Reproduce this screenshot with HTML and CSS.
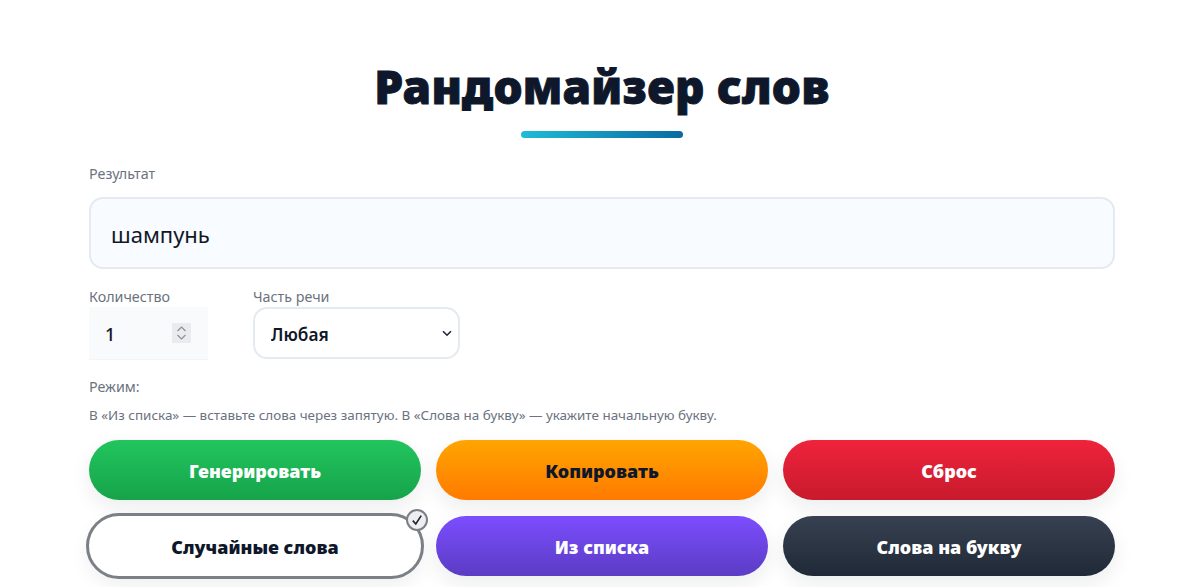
FILE: index.html
```html
<!DOCTYPE html>
<html lang="ru">
<head>
<meta charset="UTF-8">
<title>Рандомайзер слов</title>
<link rel="stylesheet" href="styles.css">
</head>
<body>
<div class="wrap">
<h1>Рандомайзер слов</h1>
<div class="title-line"></div>
<label class="label result-label" for="result">Результат</label>
<input type="text" id="result" class="result" value="шампунь" readonly>
<div class="controls">
<div class="field">
<label class="label" for="count">Количество</label>
<div class="count-box">
<input type="number" id="count" class="count" value="1" min="1">
<span class="spin">
<svg width="19" height="20" viewBox="0 0 19 20"><path d="M5.5 8 L9.5 4 L13.5 8 M5.5 12 L9.5 16 L13.5 12" fill="none" stroke="#8b9098" stroke-width="1.2"/></svg>
</span>
</div>
</div>
<div class="field">
<label class="label" for="part">Часть речи</label>
<div class="part-box">
<select id="part" class="part">
<option>Любая</option>
<option>Существительное</option>
<option>Глагол</option>
</select>
<svg class="arrow" width="10" height="7" viewBox="0 0 10 7"><path d="M1 1.2 L5 5.2 L9 1.2" fill="none" stroke="#1f2937" stroke-width="1.6"/></svg>
</div>
</div>
</div>
<div class="label mode-label">Режим:</div>
<p class="hint">В «Из списка» — вставьте слова через запятую. В «Слова на букву» — укажите начальную букву.</p>
<div class="buttons">
<button class="btn green">Генерировать</button>
<button class="btn orange">Копировать</button>
<button class="btn red">Сброс</button>
<button class="btn white active">Случайные слова
<span class="check">
<svg width="16" height="16" viewBox="0 0 16 16"><path d="M3.8 8.6 L6.8 12 L12.2 3.6" fill="none" stroke="#1c1f26" stroke-width="1.6"/></svg>
</span>
</button>
<button class="btn purple">Из списка</button>
<button class="btn dark">Слова на букву</button>
</div>
</div>
</body>
</html>
```

FILE: styles.css
```css
html,body{
margin:0;
padding:0;
background:#fff;
}
body{
font-family:"Noto Sans","Liberation Sans",sans-serif;
color:#0f172a;
}
.wrap{
width:1026px;
margin-left:89px;
padding-top:56px;
padding-bottom:11px;
}
h1{
margin:0;
font-size:46px;
line-height:60px;
font-weight:900;
letter-spacing:.2px;
text-align:center;
color:#0f172a;
-webkit-text-stroke:.9px #0f172a;
}
.title-line{
width:162px;
height:7px;
margin:15px auto 0;
border-radius:4px;
background:linear-gradient(90deg,#1fbcd6,#0a6aa1);
}
.label{
display:block;
font-size:14.3px;
line-height:18px;
color:#6b7280;
}
.result-label{
margin-top:27px;
}
.result{
display:block;
box-sizing:border-box;
width:100%;
height:72px;
margin-top:14px;
padding:2px 20px 0;
border:2px solid #e5eaef;
border-radius:14px;
background:#f8fbff;
font-family:inherit;
font-size:22px;
color:#111827;
outline:none;
}
.controls{
display:flex;
gap:45px;
margin-top:19px;
}
.field .label{
line-height:17px;
margin-bottom:2px;
}
.count-box{
position:relative;
}
.count{
display:block;
box-sizing:border-box;
width:119px;
height:53px;
padding:2px 16px 0;
border:none;
border-bottom:1px solid #f1f5f9;
background:#f8fafc;
font-family:inherit;
font-size:18px;
font-weight:500;
color:#111827;
outline:none;
}
.count::-webkit-inner-spin-button{
display:none;
}
.spin{
position:absolute;
top:16px;
right:17px;
width:19px;
height:20px;
background:#e9ebee;
}
.spin svg{
display:block;
}
.part-box{
position:relative;
}
.part{
display:block;
appearance:none;
box-sizing:border-box;
width:207px;
height:52px;
padding:2px 16px 0;
border:2px solid #e5eaef;
border-radius:14px;
background:#fff;
font-family:inherit;
font-size:17.3px;
font-weight:600;
color:#111827;
outline:none;
}
.arrow{
position:absolute;
top:23px;
right:8px;
}
.mode-label{
margin-top:18px;
}
.hint{
margin:10px 0 0;
font-size:13.45px;
line-height:18px;
color:#6b7280;
}
.buttons{
display:grid;
grid-template-columns:repeat(3,1fr);
gap:16px 15px;
margin-top:16px;
}
.btn{
position:relative;
height:60px;
padding-top:2px;
border:none;
border-radius:30px;
font-family:inherit;
font-size:18px;
font-weight:900;
color:#fff;
box-shadow:0 8px 20px rgba(15,23,42,.08);
cursor:pointer;
}
.green{
background:linear-gradient(180deg,#22c55e,#16a34a);
}
.orange{
background:linear-gradient(180deg,#ffa500,#ff7a00);
color:#0f172a;
}
.red{
background:linear-gradient(180deg,#ef233c,#c81a2c);
}
.white{
background:#fff;
color:#0f172a;
}
.purple{
background:linear-gradient(180deg,#7c4dff,#5b3cc4);
}
.dark{
background:linear-gradient(180deg,#374151,#1f2937);
}
.active{
outline:3px solid #7b7f86;
}
.check{
position:absolute;
top:-7px;
right:-7px;
box-sizing:border-box;
width:22px;
height:22px;
display:flex;
align-items:center;
justify-content:center;
border:2px solid #7b7f86;
border-radius:50%;
background:#eceef1;
}
```
